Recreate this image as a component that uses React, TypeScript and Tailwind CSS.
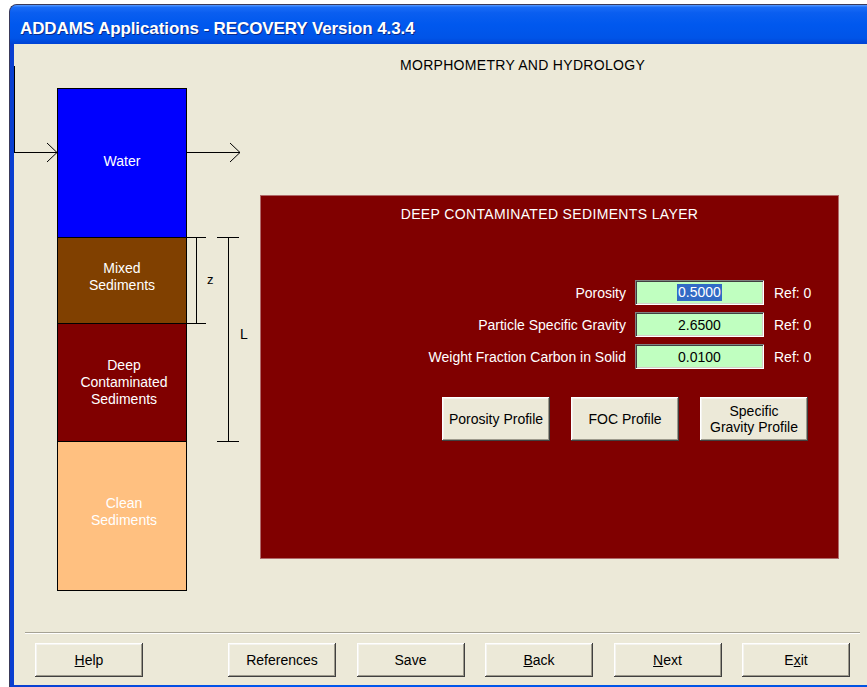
import React from "react";

const font = { fontFamily: '"Liberation Sans", Arial, sans-serif' };

function XPButton({ children, className = "" }: { children: React.ReactNode; className?: string }) {
  return (
    <div
      className={
        "flex items-center justify-center text-center bg-[#ece9d8] text-black text-[14px] leading-[16px] shadow-[inset_-1px_-1px_#404040,inset_1px_1px_#ffffff,inset_-2px_-2px_#9d9a8c,inset_2px_2px_#f4f3ee] " +
        className
      }
    >
      {children}
    </div>
  );
}

function Field({ label, value, selected }: { label: string; value: string; selected?: boolean }) {
  return (
    <>
      <div className="pr-[9px] text-right text-white text-[14px] leading-[16px] flex items-center justify-end h-[25px]">{label}</div>
      <div className="h-[25px] bg-[#c0ffc0] flex items-center justify-center text-[14px] leading-[16px] text-black shadow-[inset_1px_1px_#808080,inset_-1px_-1px_#ffffff,inset_2px_2px_#404040,inset_-2px_-2px_#d4d0c8]">
        {selected ? <span className="bg-[#316ac5] text-white px-[1px] leading-[17px]">{value}</span> : value}
      </div>
      <div className="pl-[10px] text-white text-[14px] leading-[16px] flex items-center h-[25px]">Ref: 0</div>
    </>
  );
}

export default function App() {
  return (
    <div className="w-[867px] h-[687px] bg-white pl-[9px] pt-[4px] overflow-hidden" style={font}>
      <div className="h-[683px] flex flex-col rounded-tl-[8px] overflow-hidden border-l border-t border-[#3a3a5a] bg-[#0054e3]">
        {/* Title bar */}
        <div className="h-[39px] shrink-0 flex items-start pl-[10px] pt-[15px] bg-[linear-gradient(to_bottom,#5a9cff_0%,#1a6cf6_6%,#0a5ef0_20%,#0058ee_50%,#0054e8_85%,#0043d4_100%)]">
          <span className="text-white font-bold text-[17px] leading-[17px] tracking-[-0.1px] [text-shadow:1px_1px_#0a2a8a]">
            ADDAMS Applications - RECOVERY Version 4.3.4
          </span>
        </div>
        {/* Body */}
        <div className="flex-1 pl-[4px] pb-[2px] bg-[linear-gradient(to_right,#0a3fd0,#0058ee_30%,#0054e3)]">
          <div className="h-full bg-[#ece9d8] flex flex-col">
            {/* top section */}
            <div className="h-[588px] flex shrink-0">
              {/* diagram */}
              <div className="relative w-[246px] shrink-0">
                <svg className="absolute left-0 top-0" width="246" height="560" viewBox="0 0 246 560">
                  <g stroke="#000" strokeWidth="1" fill="none" shapeRendering="crispEdges">
                    <path d="M0.5 22 V108.5 H43" />
                    <path d="M172 108.5 H226" />
                    <path d="M172 193.5 H192 M182.5 193.5 V279.5 M172 279.5 H192" />
                    <path d="M203 193.5 H225 M214.5 193.5 V397.5 M203 397.5 H225" />
                  </g>
                  <g stroke="#000" strokeWidth="1" fill="none">
                    <path d="M33 99 L43 108.5 L33 118" />
                    <path d="M216 99 L226 108.5 L216 118" />
                  </g>
                  <text x="193" y="240" fontSize="13" fill="#000" style={font}>z</text>
                  <text x="226" y="295" fontSize="14" fill="#000" style={font}>L</text>
                </svg>
                <div className="relative ml-[43px] mt-[44px] w-[130px] border border-black flex flex-col text-white text-[14px] leading-[17px] text-center">
                  <div className="h-[148px] bg-[#0000ff] flex items-center justify-center pb-[3px]">Water</div>
                  <div className="h-[86px] border-t border-black bg-[#804000] flex items-center justify-center pb-[7px]">
                    Mixed<br />Sediments
                  </div>
                  <div className="h-[118px] border-t border-black bg-[#800000] flex items-center justify-center pb-[1px] pl-[4px]">
                    Deep<br />Contaminated<br />Sediments
                  </div>
                  <div className="h-[149px] border-t border-black bg-[#ffc080] flex items-center justify-center pb-[9px] pl-[4px]">
                    Clean<br />Sediments
                  </div>
                </div>
              </div>
              {/* right part */}
              <div className="flex-1 flex flex-col pt-[13px]">
                <div className="pl-[140px] text-[14px] leading-[16px] text-black whitespace-nowrap tracking-[0.3px]">MORPHOMETRY AND HYDROLOGY</div>
                <div className="mt-[122px] w-[579px] h-[364px] bg-[#800000] border border-[#b06a6a] flex flex-col">
                  <div className="pt-[10px] text-center text-white text-[14px] leading-[16px] tracking-[0.35px]">DEEP CONTAMINATED SEDIMENTS LAYER</div>
                  <div className="mt-[58px] grid grid-cols-[374px_129px_1fr] gap-y-[7px]">
                    <Field label="Porosity" value="0.5000" selected />
                    <Field label="Particle Specific Gravity" value="2.6500" />
                    <Field label="Weight Fraction Carbon in Solid" value="0.0100" />
                  </div>
                  <div className="mt-[28px] pl-[181px] flex gap-[21px]">
                    <XPButton className="w-[108px] h-[44px]">Porosity Profile</XPButton>
                    <XPButton className="w-[108px] h-[44px]">FOC Profile</XPButton>
                    <XPButton className="w-[108px] h-[44px]">
                      Specific
                      <br />
                      Gravity Profile
                    </XPButton>
                  </div>
                </div>
              </div>
            </div>
            {/* separator */}
            <div className="ml-[11px] mr-[7px] border-t border-[#a5a294] border-b border-b-white" />
            {/* bottom buttons */}
            <div className="mt-[9px] flex pl-[21px]">
              <XPButton className="w-[108px] h-[34px]">
                <span><span className="underline">H</span>elp</span>
              </XPButton>
              <div className="ml-[85px] flex gap-[20.5px]">
                <XPButton className="w-[108px] h-[34px]">References</XPButton>
                <XPButton className="w-[108px] h-[34px]">Save</XPButton>
                <XPButton className="w-[108px] h-[34px]">
                  <span><span className="underline">B</span>ack</span>
                </XPButton>
                <XPButton className="w-[108px] h-[34px]">
                  <span><span className="underline">N</span>ext</span>
                </XPButton>
                <XPButton className="w-[108px] h-[34px]">
                  <span>E<span className="underline">x</span>it</span>
                </XPButton>
              </div>
            </div>
          </div>
        </div>
      </div>
    </div>
  );
}
